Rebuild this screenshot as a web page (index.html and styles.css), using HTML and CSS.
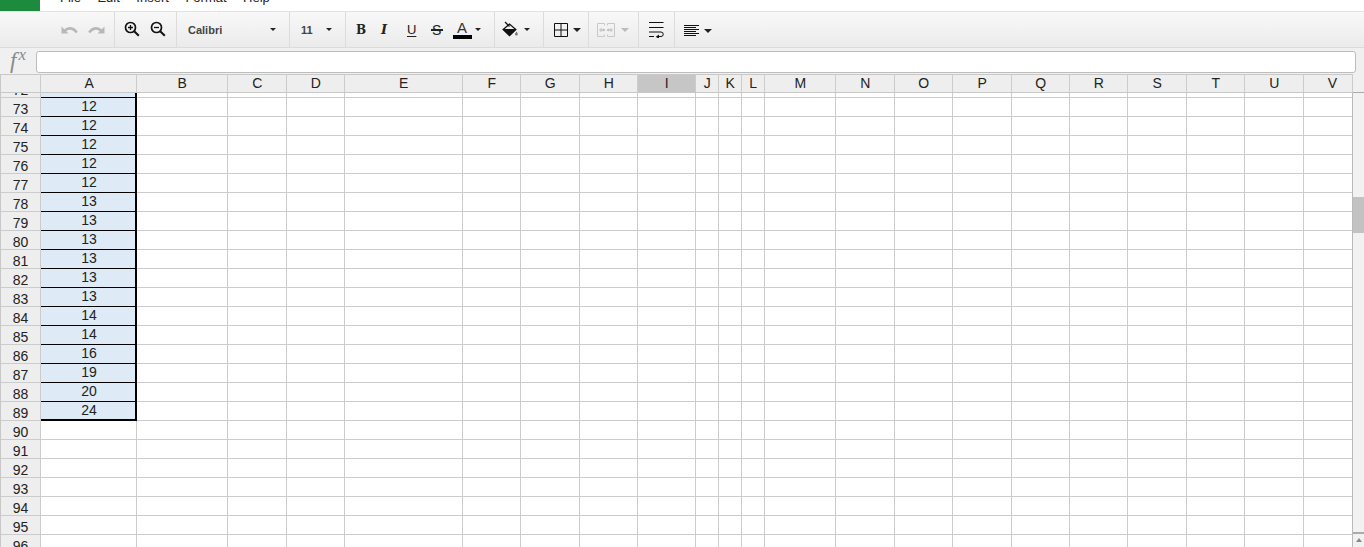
FILE: index.html
```html
<!DOCTYPE html>
<html lang="en">
<head>
<meta charset="utf-8">
<title>Spreadsheet</title>
<link rel="stylesheet" href="styles.css">
</head>
<body>
<div class="app">
  <header class="menubar">
    <div class="logo"></div>
    <nav class="menus"><span>File</span><span>Edit</span><span>Insert</span><span>Format</span><span>Help</span></nav>
  </header>

  <div class="toolbar">
    <div class="group g-history">
      <svg class="ic" width="17" height="12" viewBox="0 0 17 12"><path d="M0.500 2.500v7h7z" fill="#b8b8b8"/><path d="M3.500 7C7 3.300 12 3.300 15.800 8.500" fill="none" stroke="#b8b8b8" stroke-width="2.600"/></svg>
      <svg class="ic" width="17" height="12" viewBox="0 0 17 12"><path d="M16.500 2.500v7h-7z" fill="#b8b8b8"/><path d="M13.500 7C10 3.300 5 3.300 1.200 8.500" fill="none" stroke="#b8b8b8" stroke-width="2.600"/></svg>
    </div>
    <div class="group g-zoom">
      <svg class="ic" width="16" height="16" viewBox="0 0 16 16"><circle cx="6.500" cy="6.500" r="5" fill="none" stroke="#111" stroke-width="1.700"/><path d="M10.200 10.200l4.600 4.600" stroke="#111" stroke-width="2"/><path d="M4 6.500h5M6.500 4v5" stroke="#111" stroke-width="1.300"/></svg>
      <svg class="ic" width="16" height="16" viewBox="0 0 16 16"><circle cx="6.500" cy="6.500" r="5" fill="none" stroke="#111" stroke-width="1.700"/><path d="M10.200 10.200l4.600 4.600" stroke="#111" stroke-width="2"/><path d="M4 6.500h5" stroke="#111" stroke-width="1.300"/></svg>
    </div>
    <div class="group g-font"><span class="sel-label">Calibri</span><i class="caret"></i></div>
    <div class="group g-size"><span class="sel-label">11</span><i class="caret"></i></div>
    <div class="group g-format">
      <span class="fmt bold">B</span>
      <span class="fmt italic">I</span>
      <span class="fmt under">U</span>
      <span class="fmt strike">S</span>
      <span class="color-a"><span class="a-letter">A</span><span class="a-bar"></span></span>
      <i class="caret"></i>
    </div>
    <div class="group g-fill">
      <svg class="ic" width="16" height="16" viewBox="0 0 16 16"><path d="M1.200 8.500L7.500 3l6.300 5.500-6.300 6z" fill="none" stroke="#111" stroke-width="1.300"/><path d="M.5 8h14L7.500 15z" fill="#111"/><path d="M3 1l4.500 4.500" stroke="#111" stroke-width="1.300"/><path d="M14.500 10.500c.7 1.100 1.300 1.900 1.300 2.700a1.400 1.400 0 0 1-2.800 0c0-.8.800-1.600 1.500-2.700z" fill="#777"/></svg>
      <i class="caret"></i>
    </div>
    <div class="group g-border">
      <svg class="ic" width="14" height="14" viewBox="0 0 14 14"><path d="M.5.500h13v13H.5zM7 .5v13M.5 7h13" fill="none" stroke="#111"/></svg>
      <i class="caret caret-lg"></i>
    </div>
    <div class="group g-merge">
      <svg class="ic" width="18" height="14" viewBox="0 0 18 14"><path d="M7.500 2.500V.5H.5v13h7v-2M10.500 2.500V.5h7v13h-7v-2" fill="none" stroke="#c8c8c8"/><path d="M2 7h4M4 5v4M12 7h4M14 5v4M6 6v2l2-1zM12 6v2l-2-1z" stroke="#c0c0c0" fill="#c0c0c0" stroke-width="1"/></svg>
      <i class="caret caret-lg caret-off"></i>
    </div>
    <div class="group g-wrap">
      <svg class="ic" width="15" height="16" viewBox="0 0 15 16"><path d="M0 .5h14.500M0 5.500h14.500M0 10h12a2.200 2.200 0 0 1 0 4.500H9M0 14.500h5" stroke="#111" fill="none"/><path d="M10 12.500v4.500l-3.200-2.200z" fill="#111"/></svg>
    </div>
    <div class="group g-align">
      <svg class="ic" width="15" height="12" viewBox="0 0 15 12"><path d="M0 .5h15M0 2.500h12M0 4.500h15M0 6.500h12M0 8.500h15M0 10.500h12" stroke="#111" fill="none"/></svg>
      <i class="caret caret-lg"></i>
    </div>
  </div>

  <div class="formula">
    <span class="fx">f<sup>x</sup></span>
    <div class="input"></div>
  </div>

  <div class="sheet">
    <div class="head-row">
      <table class="grid">
        <colgroup><col class="c0"><col class="cA"><col class="cB"><col class="cC"><col class="cD"><col class="cE"><col class="cF"><col class="cG"><col class="cH"><col class="cI"><col class="cJ"><col class="cK"><col class="cL"><col class="cM"><col class="cN"><col class="cO"><col class="cP"><col class="cQ"><col class="cR"><col class="cS"><col class="cT"><col class="cU"><col class="cV"></colgroup>
        <tr class="hdr"><th></th><th class="col-a">A</th><th>B</th><th>C</th><th>D</th><th>E</th><th>F</th><th>G</th><th>H</th><th class="active">I</th><th>J</th><th>K</th><th>L</th><th>M</th><th>N</th><th>O</th><th>P</th><th>Q</th><th>R</th><th>S</th><th>T</th><th>U</th><th class="col-v">V</th></tr>
      </table>
      <div class="head-corner"></div>
    </div>
    <div class="body-row">
      <div class="viewport">
        <table class="grid rows">
          <colgroup><col class="c0"><col class="cA"><col class="cB"><col class="cC"><col class="cD"><col class="cE"><col class="cF"><col class="cG"><col class="cH"><col class="cI"><col class="cJ"><col class="cK"><col class="cL"><col class="cM"><col class="cN"><col class="cO"><col class="cP"><col class="cQ"><col class="cR"><col class="cS"><col class="cT"><col class="cU"><col class="cV"></colgroup>
          <tr><th>72</th><td class="s">12</td><td></td><td></td><td></td><td></td><td></td><td></td><td></td><td></td><td></td><td></td><td></td><td></td><td></td><td></td><td></td><td></td><td></td><td></td><td></td><td></td><td></td></tr>
          <tr><th>73</th><td class="s">12</td><td></td><td></td><td></td><td></td><td></td><td></td><td></td><td></td><td></td><td></td><td></td><td></td><td></td><td></td><td></td><td></td><td></td><td></td><td></td><td></td><td></td></tr>
          <tr><th>74</th><td class="s">12</td><td></td><td></td><td></td><td></td><td></td><td></td><td></td><td></td><td></td><td></td><td></td><td></td><td></td><td></td><td></td><td></td><td></td><td></td><td></td><td></td><td></td></tr>
          <tr><th>75</th><td class="s">12</td><td></td><td></td><td></td><td></td><td></td><td></td><td></td><td></td><td></td><td></td><td></td><td></td><td></td><td></td><td></td><td></td><td></td><td></td><td></td><td></td><td></td></tr>
          <tr><th>76</th><td class="s">12</td><td></td><td></td><td></td><td></td><td></td><td></td><td></td><td></td><td></td><td></td><td></td><td></td><td></td><td></td><td></td><td></td><td></td><td></td><td></td><td></td><td></td></tr>
          <tr><th>77</th><td class="s">12</td><td></td><td></td><td></td><td></td><td></td><td></td><td></td><td></td><td></td><td></td><td></td><td></td><td></td><td></td><td></td><td></td><td></td><td></td><td></td><td></td><td></td></tr>
          <tr><th>78</th><td class="s">13</td><td></td><td></td><td></td><td></td><td></td><td></td><td></td><td></td><td></td><td></td><td></td><td></td><td></td><td></td><td></td><td></td><td></td><td></td><td></td><td></td><td></td></tr>
          <tr><th>79</th><td class="s">13</td><td></td><td></td><td></td><td></td><td></td><td></td><td></td><td></td><td></td><td></td><td></td><td></td><td></td><td></td><td></td><td></td><td></td><td></td><td></td><td></td><td></td></tr>
          <tr><th>80</th><td class="s">13</td><td></td><td></td><td></td><td></td><td></td><td></td><td></td><td></td><td></td><td></td><td></td><td></td><td></td><td></td><td></td><td></td><td></td><td></td><td></td><td></td><td></td></tr>
          <tr><th>81</th><td class="s">13</td><td></td><td></td><td></td><td></td><td></td><td></td><td></td><td></td><td></td><td></td><td></td><td></td><td></td><td></td><td></td><td></td><td></td><td></td><td></td><td></td><td></td></tr>
          <tr><th>82</th><td class="s">13</td><td></td><td></td><td></td><td></td><td></td><td></td><td></td><td></td><td></td><td></td><td></td><td></td><td></td><td></td><td></td><td></td><td></td><td></td><td></td><td></td><td></td></tr>
          <tr><th>83</th><td class="s">13</td><td></td><td></td><td></td><td></td><td></td><td></td><td></td><td></td><td></td><td></td><td></td><td></td><td></td><td></td><td></td><td></td><td></td><td></td><td></td><td></td><td></td></tr>
          <tr><th>84</th><td class="s">14</td><td></td><td></td><td></td><td></td><td></td><td></td><td></td><td></td><td></td><td></td><td></td><td></td><td></td><td></td><td></td><td></td><td></td><td></td><td></td><td></td><td></td></tr>
          <tr><th>85</th><td class="s">14</td><td></td><td></td><td></td><td></td><td></td><td></td><td></td><td></td><td></td><td></td><td></td><td></td><td></td><td></td><td></td><td></td><td></td><td></td><td></td><td></td><td></td></tr>
          <tr><th>86</th><td class="s">16</td><td></td><td></td><td></td><td></td><td></td><td></td><td></td><td></td><td></td><td></td><td></td><td></td><td></td><td></td><td></td><td></td><td></td><td></td><td></td><td></td><td></td></tr>
          <tr><th>87</th><td class="s">19</td><td></td><td></td><td></td><td></td><td></td><td></td><td></td><td></td><td></td><td></td><td></td><td></td><td></td><td></td><td></td><td></td><td></td><td></td><td></td><td></td><td></td></tr>
          <tr><th>88</th><td class="s">20</td><td></td><td></td><td></td><td></td><td></td><td></td><td></td><td></td><td></td><td></td><td></td><td></td><td></td><td></td><td></td><td></td><td></td><td></td><td></td><td></td><td></td></tr>
          <tr class="last-sel"><th>89</th><td class="s">24</td><td></td><td></td><td></td><td></td><td></td><td></td><td></td><td></td><td></td><td></td><td></td><td></td><td></td><td></td><td></td><td></td><td></td><td></td><td></td><td></td><td></td></tr>
          <tr><th>90</th><td></td><td></td><td></td><td></td><td></td><td></td><td></td><td></td><td></td><td></td><td></td><td></td><td></td><td></td><td></td><td></td><td></td><td></td><td></td><td></td><td></td><td></td></tr>
          <tr><th>91</th><td></td><td></td><td></td><td></td><td></td><td></td><td></td><td></td><td></td><td></td><td></td><td></td><td></td><td></td><td></td><td></td><td></td><td></td><td></td><td></td><td></td><td></td></tr>
          <tr><th>92</th><td></td><td></td><td></td><td></td><td></td><td></td><td></td><td></td><td></td><td></td><td></td><td></td><td></td><td></td><td></td><td></td><td></td><td></td><td></td><td></td><td></td><td></td></tr>
          <tr><th>93</th><td></td><td></td><td></td><td></td><td></td><td></td><td></td><td></td><td></td><td></td><td></td><td></td><td></td><td></td><td></td><td></td><td></td><td></td><td></td><td></td><td></td><td></td></tr>
          <tr><th>94</th><td></td><td></td><td></td><td></td><td></td><td></td><td></td><td></td><td></td><td></td><td></td><td></td><td></td><td></td><td></td><td></td><td></td><td></td><td></td><td></td><td></td><td></td></tr>
          <tr><th>95</th><td></td><td></td><td></td><td></td><td></td><td></td><td></td><td></td><td></td><td></td><td></td><td></td><td></td><td></td><td></td><td></td><td></td><td></td><td></td><td></td><td></td><td></td></tr>
          <tr><th>96</th><td></td><td></td><td></td><td></td><td></td><td></td><td></td><td></td><td></td><td></td><td></td><td></td><td></td><td></td><td></td><td></td><td></td><td></td><td></td><td></td><td></td><td></td></tr>
        </table>
      </div>
      <div class="scrollbar">
        <div class="track-top"></div>
        <div class="thumb"></div>
        <div class="track-rest"></div>
        <div class="sb-btn"><i class="sb-arrow"></i></div>
      </div>
    </div>
  </div>
</div>
</body>
</html>
```
FILE: styles.css
```css
* { box-sizing: border-box; }
html, body { margin: 0; height: 100%; overflow: hidden; background: #fff; }
body { font-family: "Liberation Sans", Arial, sans-serif; color: #222; }
.app { height: 547px; display: flex; flex-direction: column; overflow: hidden; }

.menubar { height: 11px; display: flex; flex: none; overflow: hidden; background: #fff; }
.logo { width: 40px; background: #1e8a3e; }
.menus { display: flex; gap: 16.500px; padding-left: 20px; font-size: 13px; line-height: 15px; margin-top: -10px; color: #222; }

.toolbar { height: 37px; flex: none; display: flex; padding-left: 40px; border-top: 1px solid #e2e2e2; border-bottom: 1px solid #dcdcdc; background: linear-gradient(#f8f8f8, #ebebeb); }
.group { display: flex; align-items: center; height: 100%; border-right: 1px solid #dcdcdc; flex: none; }
.ic { display: block; flex: none; }
.caret { display: block; width: 0; height: 0; border-left: 3px solid transparent; border-right: 3px solid transparent; border-top: 3px solid #222; flex: none; }
.caret-lg { border-left-width: 4px; border-right-width: 4px; border-top-width: 4px; }
.caret-off { border-top-color: #bbb; }

.g-history { width: 75px; padding-left: 21px; gap: 10px; }
.g-zoom { width: 62px; padding-left: 9px; gap: 10px; padding-bottom: 2px; }
.g-font { width: 113px; padding-left: 11px; padding-right: 13px; justify-content: space-between; }
.g-size { width: 56px; padding-left: 11px; padding-right: 13px; justify-content: space-between; }
.sel-label { font-size: 11px; font-weight: 700; color: #444; }
.g-format { width: 149px; padding-left: 10px; }
.fmt { width: 25px; font-size: 13px; line-height: 16px; text-align: left; color: #222; }
.bold { font-weight: 700; font-family: "DejaVu Serif", serif; font-size: 12px; }
.italic { font-style: italic; font-weight: 700; font-family: "DejaVu Serif", serif; font-size: 13px; }
.under { text-decoration: underline; text-decoration-thickness: 1px; text-underline-offset: 2px; font-size: 13px; padding-left: 1px; }
.strike { position: relative; font-size: 14px; padding-left: 1px; }
.strike::after { content: ""; position: absolute; left: 0; top: 7px; width: 12px; height: 2px; background: #222; }
.color-a { width: 20px; margin-left: -4px; margin-right: 3px; display: flex; flex-direction: column; align-items: center; }
.a-letter { font-size: 15px; line-height: 14px; color: #333; }
.a-bar { display: block; width: 19px; height: 4px; background: #000; margin-top: 0; }
.g-fill { width: 49px; padding-left: 7px; gap: 6px; padding-bottom: 1px; }
.g-border { width: 45px; padding-left: 10px; gap: 5px; padding-top: 1px; }
.g-merge { width: 50px; padding-left: 8px; gap: 6px; padding-top: 1px; }
.g-wrap { width: 36px; padding-left: 10px; }
.g-align { border-right: 0; padding-left: 9px; gap: 5px; padding-top: 2px; }

.formula { height: 26px; flex: none; display: flex; align-items: center; background: #f0f0f0; }
.fx { width: 36px; flex: none; padding-left: 10px; font-family: "Liberation Serif", serif; font-style: italic; font-size: 23px; color: #8a8a8a; line-height: 22px; }
.fx sup { font-size: 17px; line-height: 0; vertical-align: 8px; margin-left: 2px; }
.input { width: 1320px; height: 22px; margin-top: 2px; background: #fff; border: 1px solid #bdbdbd; border-radius: 3px; }

.sheet { flex: 1; min-height: 0; display: flex; flex-direction: column; }
.head-row { display: flex; height: 19px; flex: none; background: #f0f0f0; }
.head-corner { flex: 1; border-bottom: 1px solid #aaa; background: #f0f0f0; }
.body-row { flex: 1; min-height: 0; display: flex; }
.viewport { width: 1352px; overflow: hidden; }

.grid { table-layout: fixed; width: 1352px; flex: none; border-collapse: separate; border-spacing: 0; font-size: 14px; color: #222; }
.c0 { width: 41px; } .cA { width: 96px; } .cB { width: 91px; } .cC { width: 59px; } .cD { width: 58px; }
.cE { width: 118px; } .cF { width: 58px; } .cG { width: 59px; } .cH { width: 58px; } .cI { width: 58px; }
.cJ { width: 23px; } .cK { width: 23px; } .cL { width: 23px; } .cM { width: 71px; } .cN { width: 59px; }
.cO { width: 58px; } .cP { width: 59px; } .cQ { width: 58px; } .cR { width: 58px; } .cS { width: 59px; }
.cT { width: 58px; } .cU { width: 59px; } .cV { width: 49px; }

.grid th, .grid td { padding: 0; border-right: 1px solid #ccc; border-bottom: 1px solid #ccc; overflow: hidden; white-space: nowrap; text-align: center; font-weight: 400; }
.hdr th { height: 19px; padding-left: .5px; background: #eee; border-top: 1px solid #c8c8c8; border-bottom: 1px solid #c8c8c8; line-height: 17px; vertical-align: top; }
.hdr th:first-child { border-left: 1px solid #c8c8c8; }
.hdr .active { background: #c6c6c6; }
.hdr .col-a { padding-left: 1.500px; }
.hdr .col-v { padding-left: 9px; }
.rows { margin-top: -14px; }
.rows tr { height: 19px; }
.rows th { height: 19px; background: #eee; border-left: 1px solid #c8c8c8; line-height: 14px; padding-top: 4px; vertical-align: top; }
.rows td { height: 19px; line-height: 16px; padding-bottom: 2px; vertical-align: top; }
.rows td.s { padding-left: 2px; background: #deeaf6; border-right: 2px solid #000; border-bottom: 1px solid #000; }
.rows .last-sel td.s { border-bottom: 2px solid #000; padding-bottom: 1px; }

.scrollbar { width: 12px; flex: none; display: flex; flex-direction: column; background: #f2f2f2; border-left: 1px solid #b8b8b8; }
.track-top { height: 104px; flex: none; }
.thumb { height: 36px; flex: none; background: #c2c2c2; }
.track-rest { flex: 1; }
.sb-btn { height: 15px; flex: none; border-top: 2px solid #aaa; display: flex; justify-content: center; padding-top: 4px; background: #f2f2f2; }
.sb-arrow { display: block; width: 0; height: 0; border-left: 3px solid transparent; border-right: 3px solid transparent; border-bottom: 4px solid #888; }
```
